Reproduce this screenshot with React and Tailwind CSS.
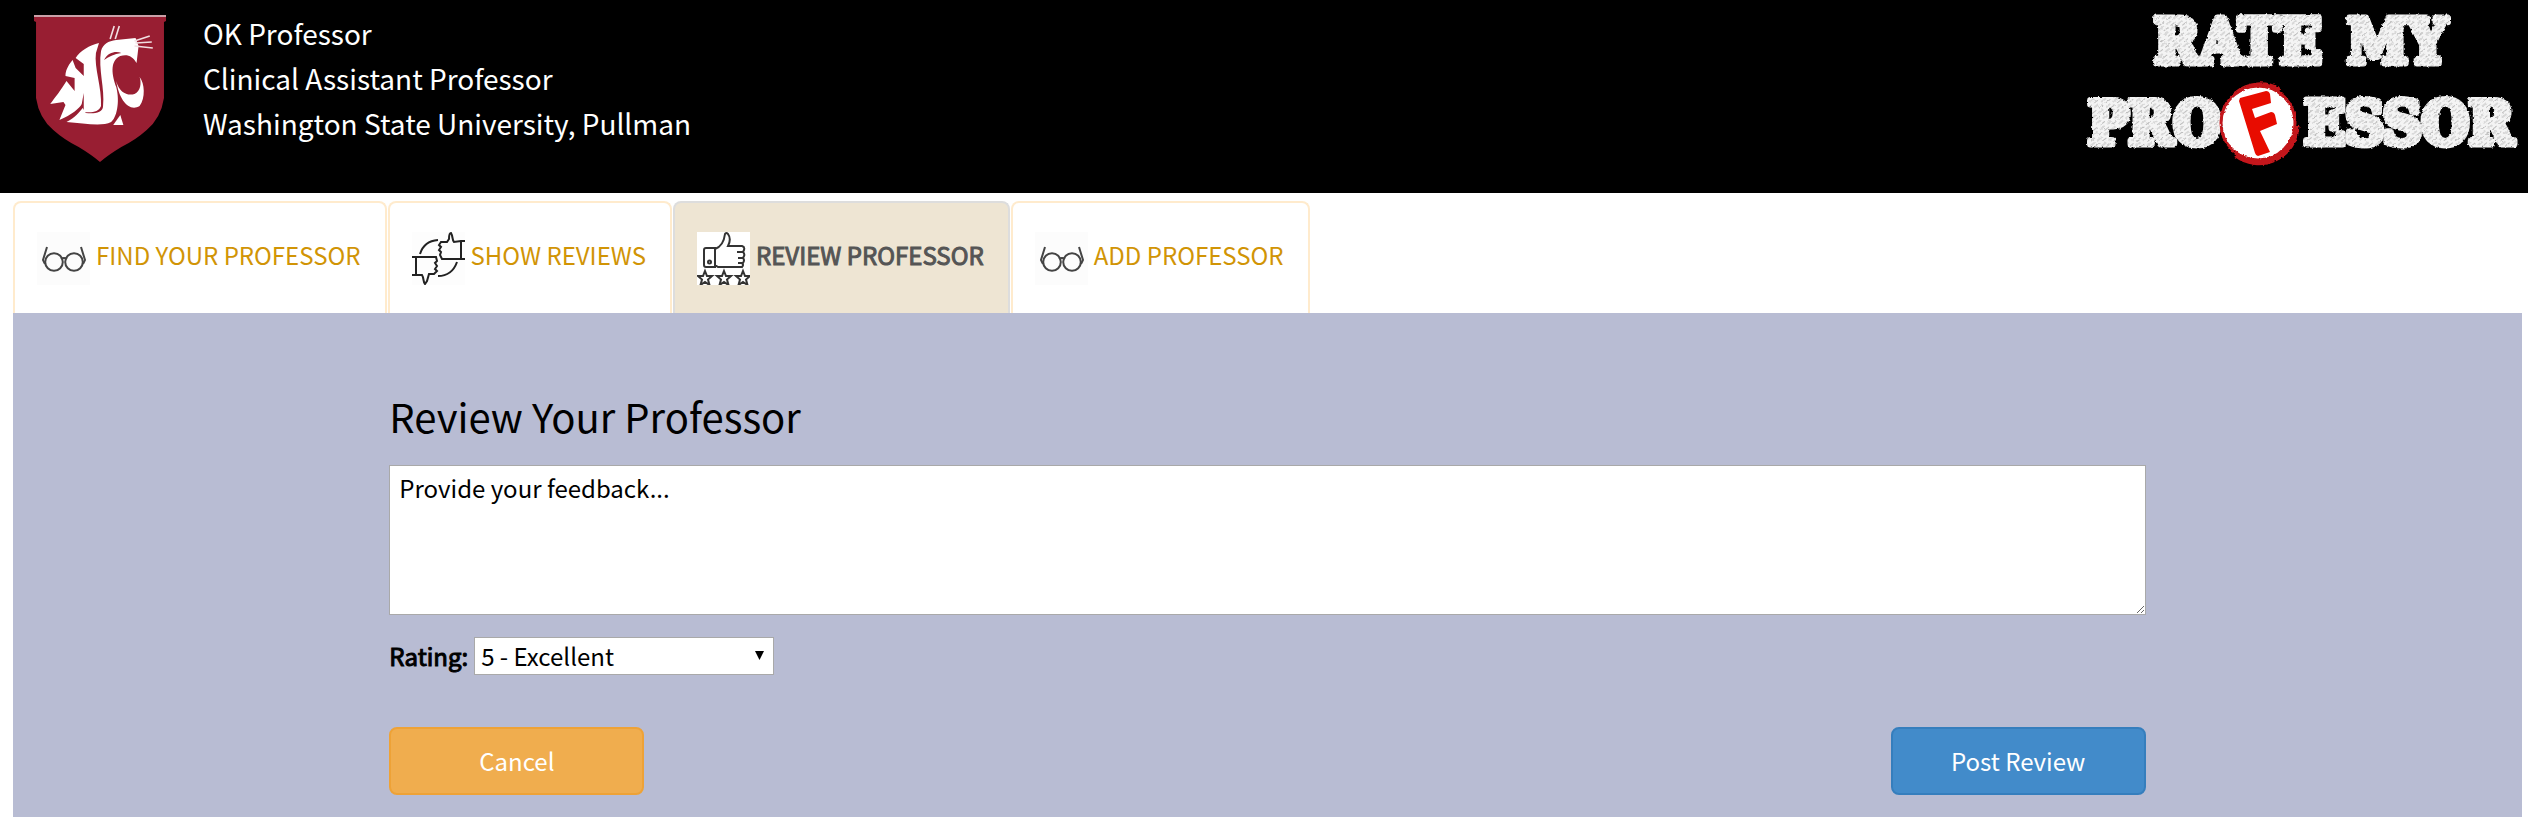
const font = "font-['Noto_Sans_CJK_SC','Open_Sans',sans-serif]";

function Shield() {
  return (
    <svg className="h-[148px] w-[132px] shrink-0" viewBox="35 15 130 148" preserveAspectRatio="none" role="img" aria-label="University crest">
      <path d="M35 16H165V21L163 22V98Q160 118 146 130Q135 140 121 147Q108 155 100 162Q92 155 79 147Q65 140 54 130Q40 118 37 98V22L35 21Z" fill="#981e32" />
      <path d="M35 16H165" stroke="#c9a0a8" strokeWidth="2" />
      <g fill="#fff">
        <path d="M99 43C90 45 80 51 76 58L84 64L84 76L76 68L73 60C68 66 66 71 66 76L75 78L75 91L67 81C61 91 56 97 51 104L64 102L66 105L60 120C72 115 80 108 82 104L84 93V112C92 113 99 112 101 106C102 88 94 67 96 53Z" />
        <path d="M101 51C103 44 108 41 116 40L135 38L138 46L136 63C132 56 127 54 120 56C109 61 112 76 116 87C120 103 116 118 111 122C101 127 84 123 67 122C76 117 79 113 83 108L86 113C94 114 103 113 103 106C105 89 98 69 101 51Z" />
        <path d="M116 81C119 93 127 96 134 94C140 91 141 83 139 77C144 83 145 98 139 106C129 112 119 101 116 81Z" />
        <path d="M120 115L123 125H113Z" />
      </g>
      <path d="M104 60C108 52 116 51 121 53C114 54 108 57 104 60Z" fill="#981e32" />
      <path d="M110 39L114 26M115 39L119 26M134 41L149 36M135 43L151 42M134 46L152 48" stroke="#f1dfe2" strokeWidth="1.6" fill="none" />
    </svg>
  );
}

function BrandMark() {
  return (
    <svg className="h-[175px] w-[457px] shrink-0" viewBox="2071 0 457 175" role="img" aria-label="Rate My Professor">
      <defs>
        <pattern id="chalk" width="9" height="7" patternUnits="userSpaceOnUse" patternTransform="rotate(-38)">
          <rect width="9" height="7" fill="#f4f4f4" />
          <path d="M0 2H6M3 5.500H9" stroke="#bdbdbd" strokeWidth="1" />
        </pattern>
        <filter id="rough" x="-5%" y="-5%" width="110%" height="110%">
          <feTurbulence type="fractalNoise" baseFrequency="0.35" numOctaves="2" seed="4" result="n" />
          <feDisplacementMap in="SourceGraphic" in2="n" scale="3" xChannelSelector="R" yChannelSelector="G" />
        </filter>
      </defs>
      <g filter="url(#rough)" fill="url(#chalk)" stroke="url(#chalk)" strokeWidth="7" strokeLinejoin="round" fontSize="61" className="font-['DejaVu_Serif_Condensed','DejaVu_Serif',serif] font-bold">
        <text x="2154" y="63">RATE</text>
        <text x="2347" y="63">MY</text>
        <text x="2088" y="144" fontSize="60">PRO</text>
        <text x="2304" y="144" fontSize="60">ESSOR</text>
      </g>
      <circle cx="2259" cy="123" r="37" fill="#fff" />
      <g filter="url(#rough)" fill="none" stroke="#c4161a">
        <circle cx="2258" cy="123" r="37" strokeWidth="3" />
        <path d="M2297 126A38 38 0 0 1 2236 155" strokeWidth="5" />
        <path d="M2236 93A38 38 0 0 1 2280 90" strokeWidth="4" />
      </g>
      <path d="M2240 98L2266 91Q2269 91 2270 94L2271 103L2252 109L2255 118L2271 112Q2274 112 2275 115L2277 124L2260 131L2270 152L2258 156Q2256 156 2255 153L2239 101Z" fill="#e80c00" />
    </svg>
  );
}

function Glasses() {
  return (
    <svg className="size-[53px] shrink-0 bg-[#fcfcfc]" viewBox="0 0 53 53" fill="none" stroke="#444" strokeWidth="2" aria-hidden="true">
      <circle cx="17" cy="30" r="8.800" />
      <circle cx="37" cy="30" r="8.800" />
      <path d="M24 27Q27 25 30 27M10 15L6 28L8 32M44 15L48 28L46 32" />
    </svg>
  );
}

function Thumbs() {
  return (
    <svg className="size-[53px] shrink-0 bg-[#fdfdfd]" viewBox="0 0 53 53" fill="none" stroke="#222" strokeWidth="2" aria-hidden="true">
      <path d="M53 9H49L42 10C40 8 41 4 39 1C37 1 37 4 37 7L35 10H29L27 13L29 15L27 18L29 20L28 23L30 27H53M49 9V27" />
      <path d="M26 8Q12 9 8 22" />
      <path d="M0 25H24L25 29L23 31L25 34L23 37L25 39L22 42H17L15 49L13 52C11 50 12 46 10 43L0 43M4 25V42" />
      <path d="M26 44Q40 44 45 30" />
    </svg>
  );
}

function ThumbStars() {
  const star = "M0 -7L2 -2H7L3 1.500L4.500 7L0 4L-4.500 7L-3 1.500L-7 -2H-2Z";
  return (
    <svg className="size-[53px] shrink-0 bg-white" viewBox="0 0 53 53" fill="none" stroke="#333" strokeWidth="2" aria-hidden="true">
      <path d="M18 16H9Q7 16 7 18V33Q7 35 9 35H18ZM18 17C24 15 27 10 28 2Q29 0 31 2C34 6 33 10 31 14H45Q48 15 47 18L46 20M40 20H46Q48 22 47 24L46 26M41 26H46Q48 28 46 31M41 31H45Q47 33 45 35H21L18 33" />
      <circle cx="12.500" cy="30" r="1.500" />
      <path d={star} transform="translate(8 46)" />
      <path d={star} transform="translate(27 46)" />
      <path d={star} transform="translate(46 46)" />
    </svg>
  );
}

const tabs = [
  { label: "FIND YOUR PROFESSOR", Icon: Glasses },
  { label: "SHOW REVIEWS", Icon: Thumbs },
  { label: "REVIEW PROFESSOR", Icon: ThumbStars, active: true },
  { label: "ADD PROFESSOR", Icon: Glasses },
];

export default function App() {
  return (
    <div className={`flex min-h-screen flex-col bg-white text-black ${font}`}>
      <header className="flex items-start justify-between bg-black pb-[18px]">
        <div className="flex pl-[34px] pt-[15px]">
          <Shield />
          <div className="-mt-1 pl-[37px] text-[28px] leading-[45px] text-white">
            <p>OK Professor</p>
            <p>Clinical Assistant Professor</p>
            <p>Washington State University, Pullman</p>
          </div>
        </div>
        <BrandMark />
      </header>

      <nav className="flex gap-px px-[13px] pt-2" aria-label="Sections">
        {tabs.map(({ label, Icon, active }) => (
          <a
            key={label}
            href="#"
            aria-current={active ? "page" : undefined}
            className={`flex h-28 items-center gap-1.5 rounded-t-lg border-2 border-b-0 pr-6 pl-[22px] text-2xl ${
              active
                ? "border-[#dddddd] bg-[#eee5d3] text-[#555555] [-webkit-text-stroke:1px_#555555]"
                : "border-[#ffebcd] text-[#d19405]"
            }`}
          >
            <Icon />
            <span className="pb-1.5">{label}</span>
          </a>
        ))}
      </nav>

      <main className="mr-[6px] ml-[13px] grow bg-[#b8bcd3] pb-[22px]">
        <form className="mx-auto w-[70%] pt-[71px]" onSubmit={(e) => e.preventDefault()}>
          <h1 className="text-[40px] leading-[64px]">
            <label htmlFor="feedback">Review Your Professor</label>
          </h1>
          <textarea
            id="feedback"
            defaultValue="Provide your feedback..."
            className="mt-[17px] block h-[150px] w-full resize border border-[#a9a9a9] bg-white px-[9px] py-1 text-2xl leading-9"
          />
          <div className="mt-[22px] flex items-center gap-1.5 text-2xl">
            <label htmlFor="rating" className="[-webkit-text-stroke:1px_black]">Rating:</label>
            <div className="relative">
              <select id="rating" className="block h-[38px] w-[300px] appearance-none border border-[#a9a9a9] bg-white px-1.5 leading-9">
                <option>5 - Excellent</option>
                <option>4 - Good</option>
                <option>3 - Average</option>
                <option>2 - Poor</option>
                <option>1 - Bad</option>
              </select>
              <svg className="pointer-events-none absolute top-3.5 right-2.5 h-[9px] w-[9px]" viewBox="0 0 9 9" aria-hidden="true">
                <path d="M0 0H9L4.500 9Z" />
              </svg>
            </div>
          </div>
          <div className="mt-[52px] flex justify-between text-2xl text-white">
            <button type="button" className="h-[68px] w-[255px] rounded-lg border-2 border-[#eea236] bg-[#f0ad4e]">Cancel</button>
            <button type="submit" className="h-[68px] w-[255px] rounded-lg border-2 border-[#357ebd] bg-[#428bca]">Post Review</button>
          </div>
        </form>
      </main>
    </div>
  );
}
